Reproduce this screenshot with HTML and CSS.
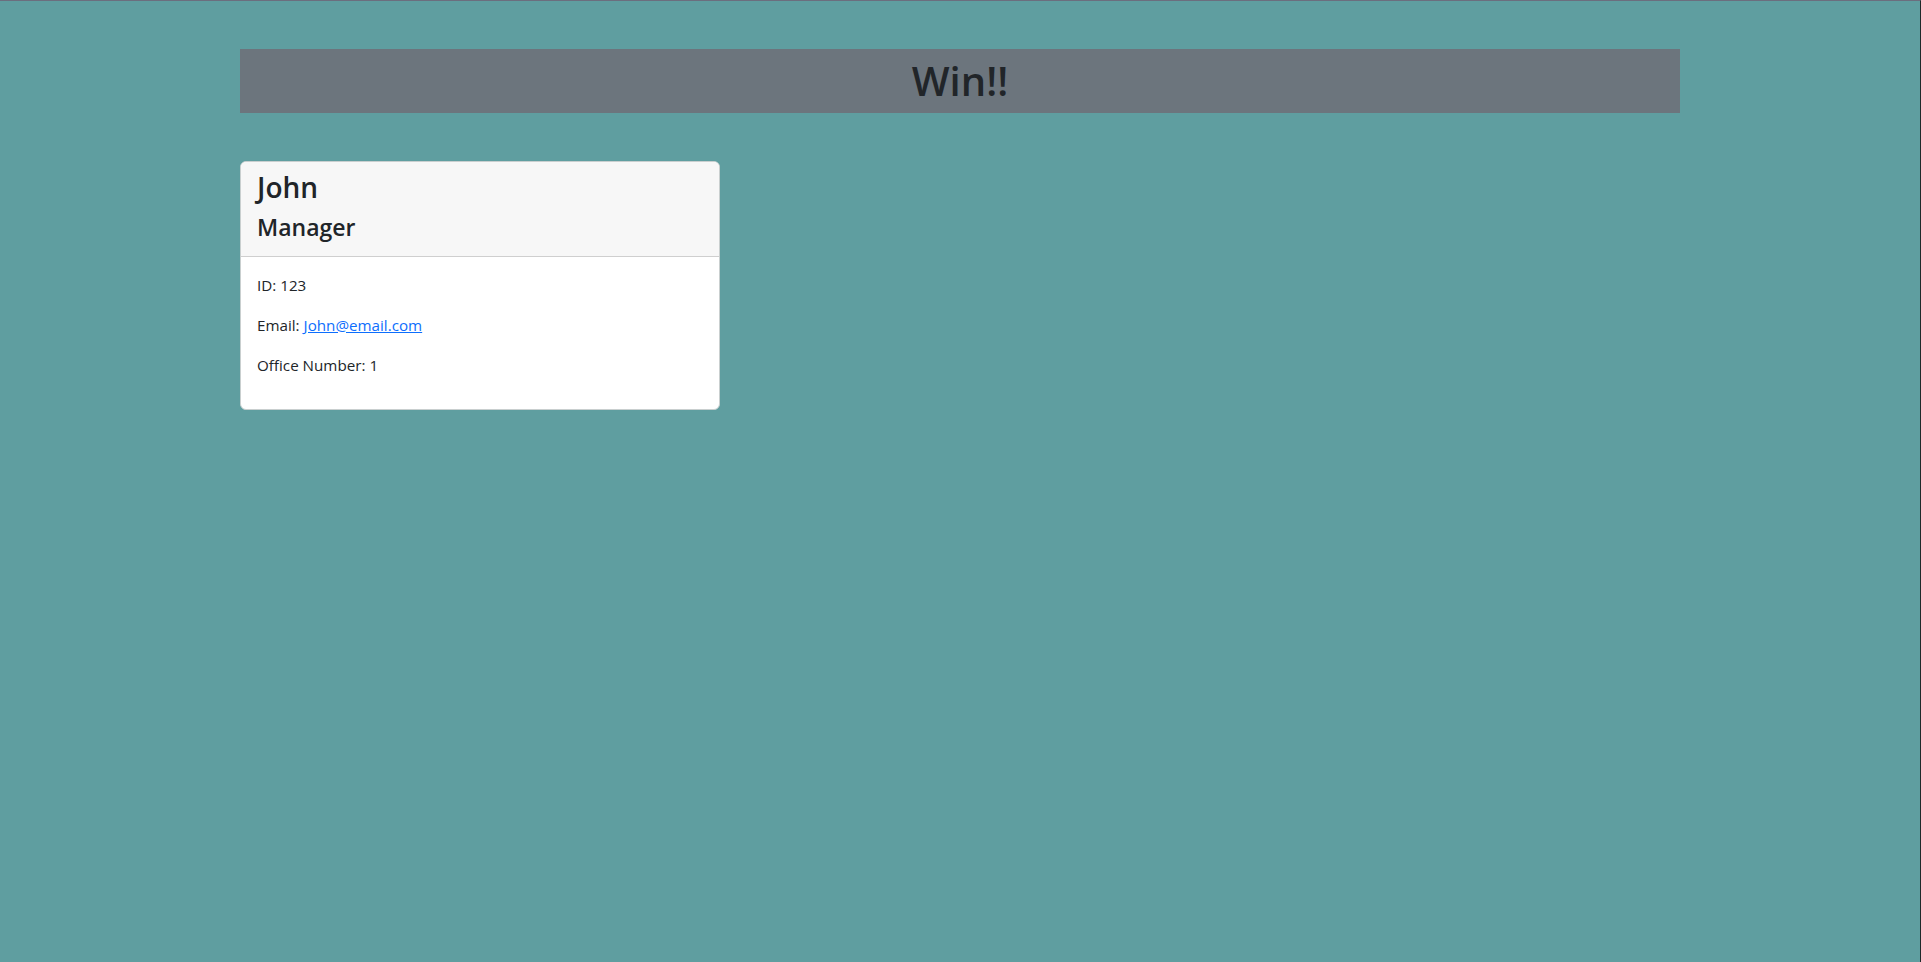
FILE: index.html
```html
<!DOCTYPE html>
<html lang="en">
<head>
<meta charset="utf-8">
<title>Team</title>
<link rel="stylesheet" href="styles.css">
</head>
<body>
  <div class="page">
    <header class="banner">
      <h1 class="banner-title">Win!!</h1>
    </header>
    <main class="cards">
      <div class="card">
        <div class="card-header">
          <h3 class="card-name">John</h3>
          <h4 class="card-role">Manager</h4>
        </div>
        <div class="card-body">
          <p class="card-line">ID: 123</p>
          <p class="card-line">Email: <a class="card-link" href="#">John@email.com</a></p>
          <p class="card-line">Office Number: 1</p>
        </div>
      </div>
    </main>
  </div>
</body>
</html>
```

FILE: styles.css
```css
html {
  margin: 0;
  min-height: 100%;
  background: #5f9ea0;
  border-top: 1px solid #6b6e7e;
  border-right: 1px solid #1e2a2a;
  box-sizing: border-box;
}
body {
  margin: 0;
  background: #5f9ea0;
  font-family: "Open Sans", "Noto Sans", sans-serif;
  font-size: 16px;
  line-height: 1.5;
  color: #212529;
}
.page {
  width: 1440px;
  margin: 0 auto;
  padding-top: 48px;
}
.banner {
  background: #6c757d;
  padding: 8px 0;
  text-align: center;
}
.banner-title {
  margin: 0;
  font-size: 40px;
  font-weight: 600;
  line-height: 48px;
  color: #212529;
}
.cards {
  display: flex;
  gap: 24px;
  margin-top: 48px;
}
.card {
  width: 480px;
  box-sizing: border-box;
  background: #fff;
  border: 1px solid #c9cfcf;
  border-radius: 6px;
  overflow: hidden;
}
.card-header {
  background: #f7f7f7;
  padding: 9px 16px 7px;
  border-bottom: 1px solid #cfcfcf;
}
.card-name {
  margin: 0 0 8px;
  font-size: 28px;
  font-weight: 600;
  line-height: 33.6px;
}
.card-role {
  margin: 0 0 8px;
  font-size: 23px;
  font-weight: 600;
  line-height: 28px;
}
.card-body {
  padding: 16px;
}
.card-line {
  margin: 0 0 16px;
  font-size: 15.2px;
  line-height: 24px;
}
.card-link {
  color: #0d6efd;
  text-decoration: underline;
}
```
